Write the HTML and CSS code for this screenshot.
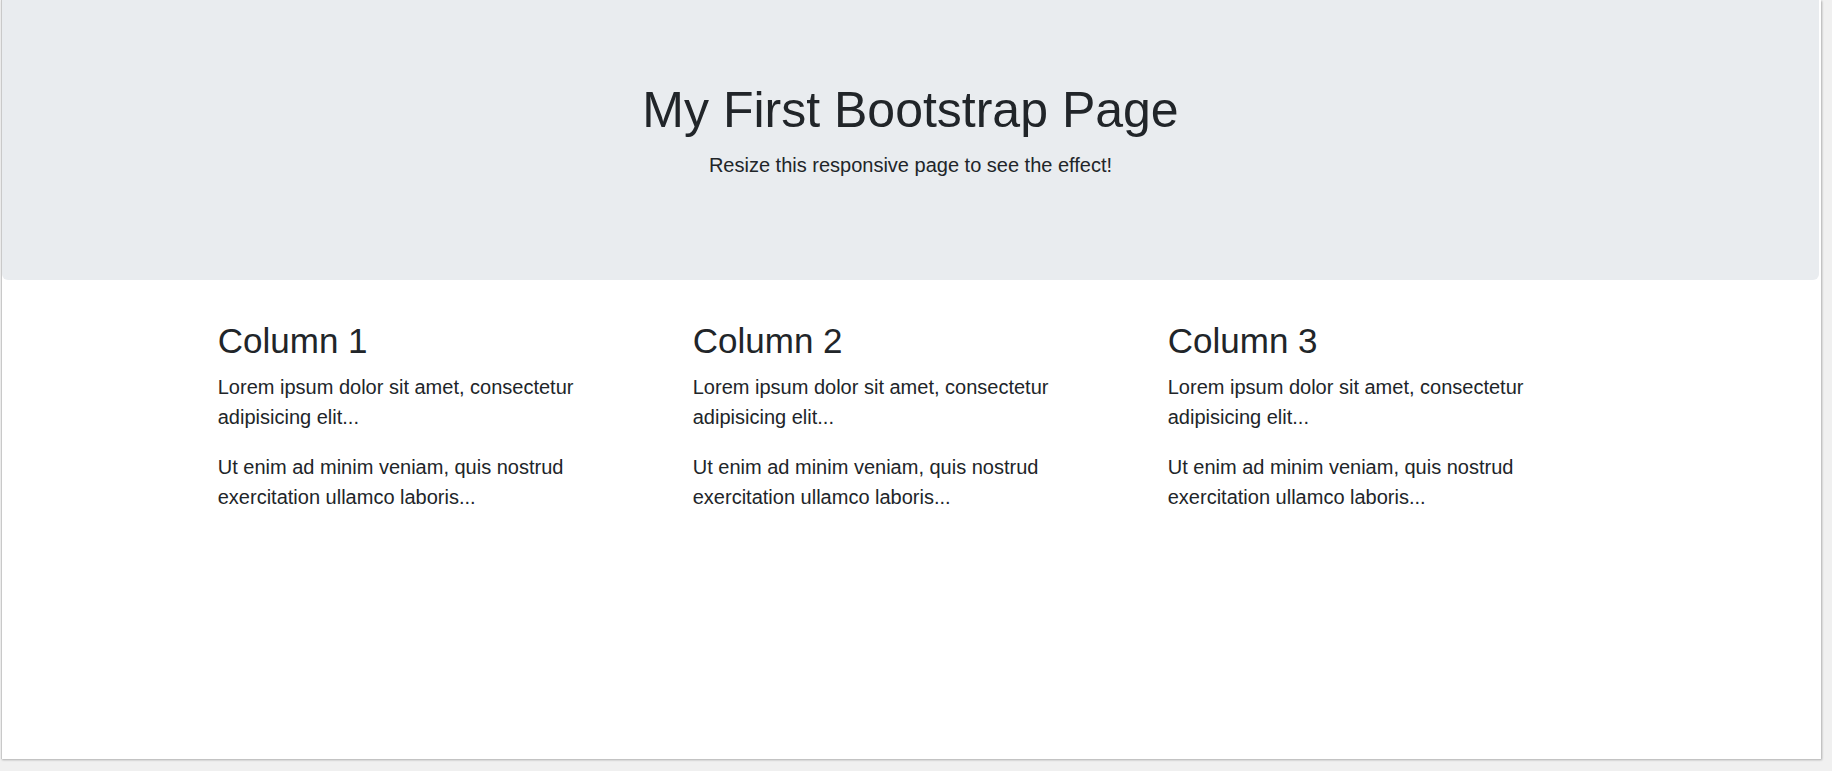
FILE: index.html
```html
<!DOCTYPE html>
<html lang="en">
<head>
<meta charset="utf-8">
<title>My First Bootstrap Page</title>
<link rel="stylesheet" href="styles.css">
</head>
<body>
<div class="frame">
  <div class="jumbotron">
    <h1 class="title">My First Bootstrap Page</h1>
    <p class="lead-text">Resize this responsive page to see the effect!</p>
  </div>
  <div class="container">
    <div class="row">
      <div class="col">
        <h3 class="col-title">Column 1</h3>
        <p class="text">Lorem ipsum dolor sit amet, consectetur adipisicing elit...</p>
        <p class="text">Ut enim ad minim veniam, quis nostrud exercitation ullamco laboris...</p>
      </div>
      <div class="col">
        <h3 class="col-title">Column 2</h3>
        <p class="text">Lorem ipsum dolor sit amet, consectetur adipisicing elit...</p>
        <p class="text">Ut enim ad minim veniam, quis nostrud exercitation ullamco laboris...</p>
      </div>
      <div class="col">
        <h3 class="col-title">Column 3</h3>
        <p class="text">Lorem ipsum dolor sit amet, consectetur adipisicing elit...</p>
        <p class="text">Ut enim ad minim veniam, quis nostrud exercitation ullamco laboris...</p>
      </div>
    </div>
  </div>
</div>
</body>
</html>
```

FILE: styles.css
```css
html, body {
  margin: 0;
  padding: 0;
}
body {
  background: #f0f0f0;
  font-family: "Liberation Sans", Arial, sans-serif;
  color: #212529;
  font-size: 20px;
  line-height: 1.5;
  height: 771px;
  overflow: hidden;
}
.frame {
  margin-left: 1px;
  width: 1820px;
  height: 759px;
  background: #fff;
  border-left: 1px solid #c9c9c9;
  box-shadow: 1px 1px 2px rgba(0, 0, 0, 0.28);
  box-sizing: border-box;
}
.jumbotron {
  background: #e9ecef;
  padding: 80px 40px;
  margin: 0 2px 40px 0;
  border-radius: 0 0 6px 6px;
  text-align: center;
}
.title {
  font-size: 50px;
  font-weight: 500;
  line-height: 1.2;
  margin: 0 0 10px;
}
.lead-text {
  margin: 0 0 20px;
}
.container {
  width: 1425px;
  margin: 0 auto;
  padding: 0 18.75px;
  box-sizing: border-box;
}
.row {
  display: flex;
  margin: 0 -18.75px;
}
.col {
  flex: 1 1 0;
  padding: 0 18.75px;
}
.col-title {
  font-size: 35px;
  font-weight: 500;
  line-height: 1.2;
  margin: 0 0 10px;
}
.text {
  margin: 0 0 20px;
}
```
